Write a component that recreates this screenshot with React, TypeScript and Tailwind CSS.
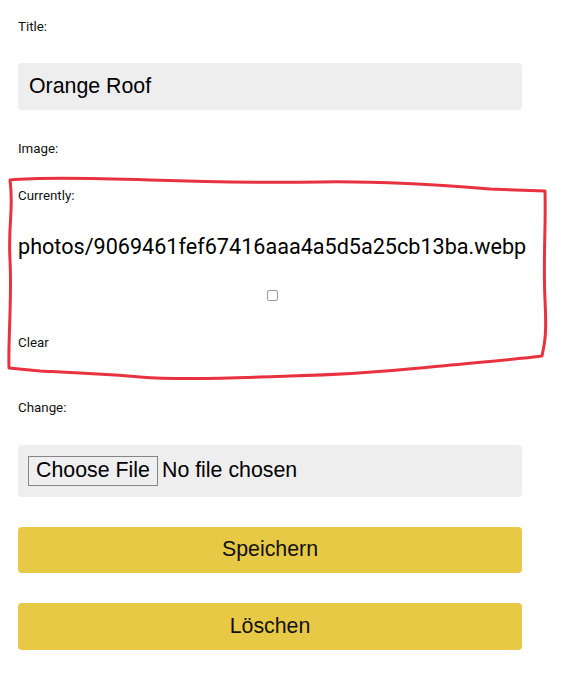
import React from 'react';

const label = "block text-[13.33px] leading-[15px] text-[#111] [font-family:Roboto,Arial,sans-serif]";
const arial = "[font-family:'Liberation_Sans',Arial,sans-serif]";

export default function App() {
  return (
    <div className="relative min-h-[676px] w-[561px] bg-white px-[18px] text-black">
      <form className="flex w-[504px] flex-col">
        <label className={`${label} mt-[19px]`}>Title:</label>
        <div className={`mt-[29px] flex h-[47px] items-center rounded-[4px] bg-[#eeeeee] px-[11px] text-[21.33px] ${arial}`}>
          Orange Roof
        </div>

        <label className={`${label} mt-[31px]`}>Image:</label>
        <span className={`${label} mt-[32px]`}>Currently:</span>
        <a className="mt-[32px] block whitespace-nowrap text-[21.6px] leading-[24px] [font-family:Roboto,sans-serif]">
          photos/9069461fef67416aaa4a5d5a25cb13ba.webp
        </a>
        <div className="mt-[31px] flex justify-center pl-[4px]">
          <span className="block h-[11px] w-[11px] rounded-[2px] border border-[#9a9a9a] bg-white" />
        </div>
        <label className={`${label} mt-[34px]`}>Clear</label>

        <label className={`${label} mt-[50px]`}>Change:</label>
        <div className={`mt-[30px] flex h-[52px] items-center rounded-[4px] bg-[#eeeeee] px-[10px] text-[21.33px] ${arial}`}>
          <span className="flex h-[30px] w-[130px] items-center justify-center border border-[#858585] bg-[#efefef]">
            Choose File
          </span>
          <span className="ml-[4px]">No file chosen</span>
        </div>

        <button
          type="button"
          className={`mt-[30px] h-[46px] rounded-[4px] bg-[#e8c945] text-[21.33px] text-[#111] ${arial}`}
        >
          Speichern
        </button>
        <button
          type="button"
          className={`mt-[30px] h-[47px] rounded-[4px] bg-[#e8c945] text-[21.33px] text-[#111] ${arial}`}
        >
          Löschen
        </button>
      </form>

      {/* hand-drawn marker outline over the "Currently" block */}
      <svg className="pointer-events-none absolute left-0 top-0" width="561" height="676">
        <path
          d="M10 180 C 40 177, 90 178, 150 180 S 260 183, 320 182 S 440 185, 490 189 L 545 191 C 546 230, 543 260, 545 300 S 544 345, 542 356 C 510 360, 460 364, 420 368 S 330 375, 290 376 S 190 381, 140 377 S 60 372, 40 371 L 9 368 C 8 340, 12 300, 10 260 S 14 210, 10 180 Z"
          fill="none"
          stroke="#e8323f"
          strokeWidth="3"
          strokeLinejoin="round"
        />
      </svg>
    </div>
  );
}
